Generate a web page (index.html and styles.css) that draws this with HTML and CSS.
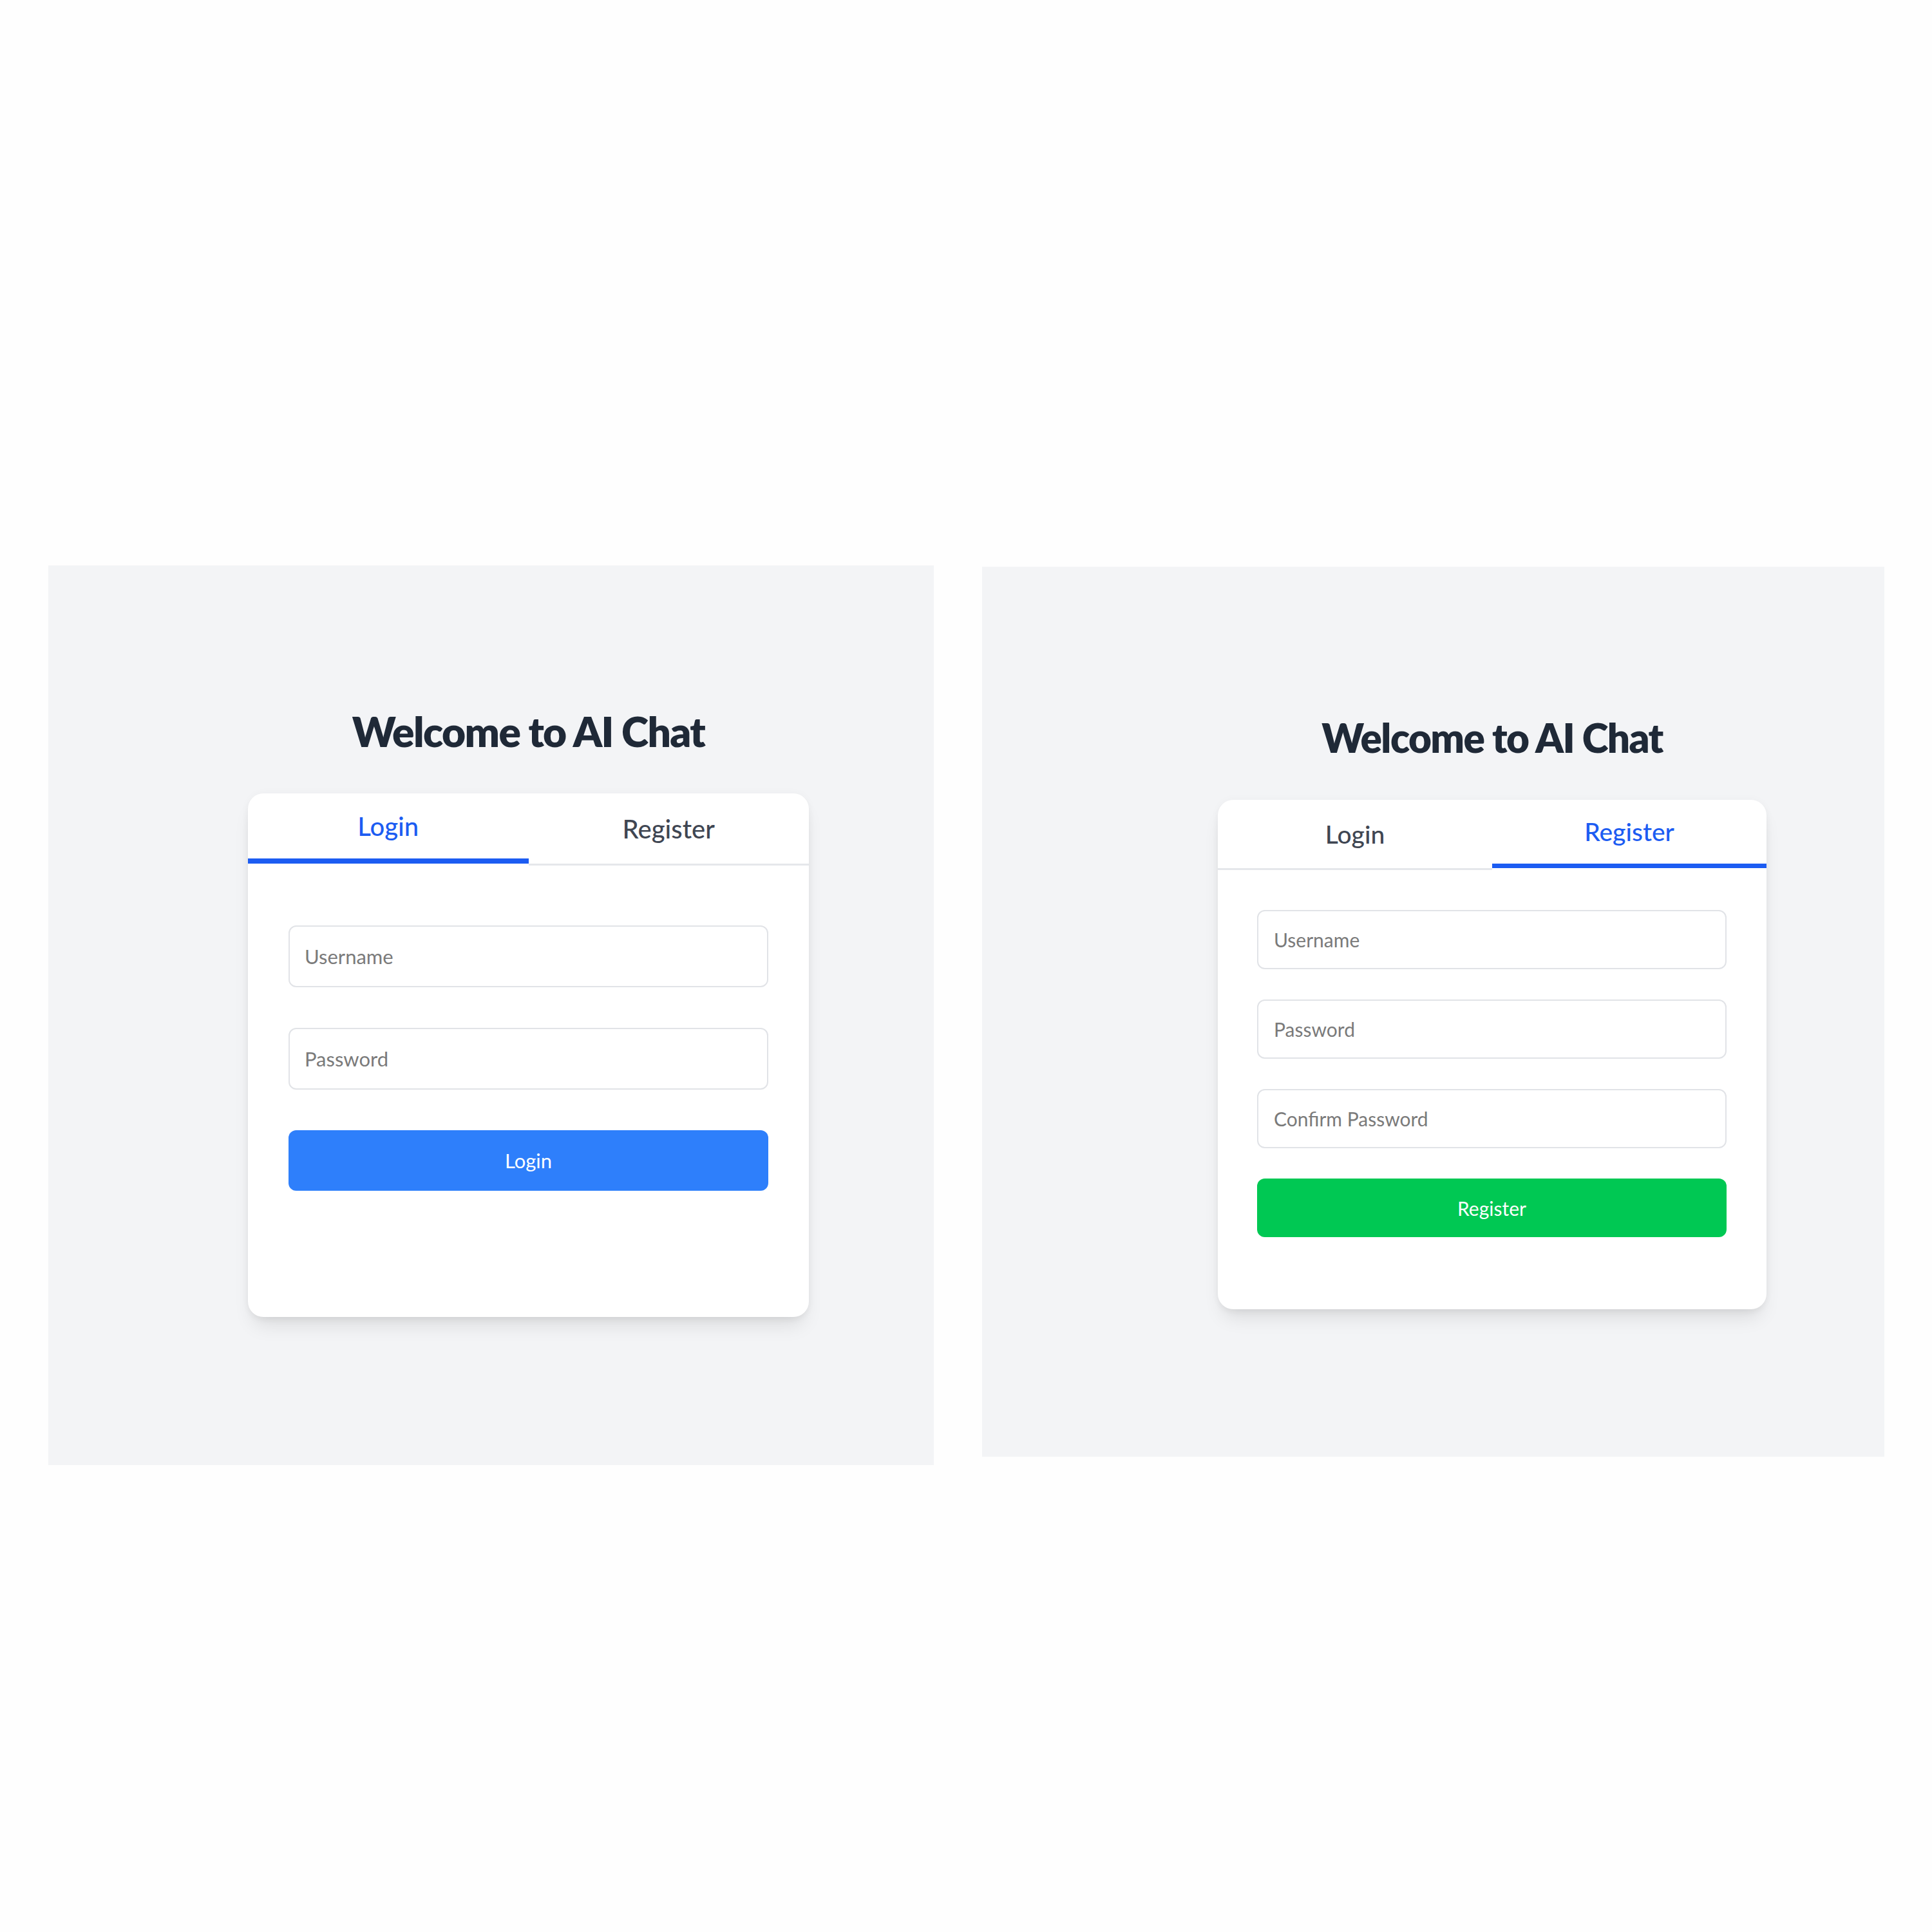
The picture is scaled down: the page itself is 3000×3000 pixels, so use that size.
FILE: index.html
```html
<!DOCTYPE html>
<html lang="en">
<head>
<meta charset="utf-8">
<title>AI Chat - Login / Register</title>
<link rel="stylesheet" href="styles.css">
</head>
<body>
<div class="stage">
  <section class="panel panel-login">
    <div class="column">
      <h1 class="title">Welcome to AI Chat</h1>
      <div class="card">
        <div class="tabs">
          <div class="tab active">Login</div>
          <div class="tab">Register</div>
        </div>
        <form class="form">
          <input class="field" type="text" placeholder="Username">
          <input class="field" type="password" placeholder="Password">
          <button class="btn btn-blue" type="button">Login</button>
        </form>
      </div>
    </div>
  </section>
  <section class="panel panel-register">
    <div class="column">
      <h1 class="title">Welcome to AI Chat</h1>
      <div class="card">
        <div class="tabs">
          <div class="tab">Login</div>
          <div class="tab active">Register</div>
        </div>
        <form class="form">
          <input class="field" type="text" placeholder="Username">
          <input class="field" type="password" placeholder="Password">
          <input class="field" type="password" placeholder="Confirm Password">
          <button class="btn btn-green" type="button">Register</button>
        </form>
      </div>
    </div>
  </section>
</div>
</body>
</html>
```
FILE: styles.css
```css
* { box-sizing: border-box; }
html, body {
  margin: 0;
  padding: 0;
  background: #fefefe;
  font-family: Lato, "Noto Sans", "Liberation Sans", sans-serif;
}
.stage {
  display: flex;
  align-items: flex-start;
  gap: 75px;
  padding-top: 878px;
  padding-left: 75px;
  width: 3000px;
  height: 3000px;
}
.panel {
  background: #f3f4f6;
}
.panel-login {
  width: 1375px;
  height: 1397px;
  padding-top: 226px;
  padding-left: 310px;
}
.panel-register {
  width: 1401px;
  height: 1382px;
  margin-top: 2px;
  padding-top: 234px;
  padding-left: 366px;
}
.panel-login .column { width: 871px; }
.panel-register .column { width: 852px; }

.title {
  margin: 0;
  text-align: center;
  font-weight: 800;
  color: #1f2937;
  line-height: 1;
  letter-spacing: -1.6px;
}
.panel-login .title { font-size: 64px; margin-bottom: 64px; }
.panel-register .title { font-size: 62px; margin-bottom: 66px; }

.card {
  background: #ffffff;
  border-radius: 24px;
  overflow: hidden;
  box-shadow: 0 20px 30px -8px rgba(0, 0, 0, 0.10), 0 6px 14px -4px rgba(0, 0, 0, 0.06), 0 0 14px rgba(0, 0, 0, 0.03);
}
.tabs {
  display: flex;
  align-items: flex-start;
}
.tab {
  flex: 1;
  display: flex;
  align-items: center;
  justify-content: center;
  box-sizing: content-box;
  color: #3f4652;
  font-weight: 500;
  line-height: 1;
  border-bottom: 3px solid #e5e7eb;
}
.tab.active {
  color: #1c5cf2;
  border-bottom-color: #1c5cf2;
}
.panel-login .tab { font-size: 40px; height: 109px; }
.panel-login .tab.active { height: 101px; border-bottom-width: 8px; }
.panel-register .tab { font-size: 39px; height: 106px; }
.panel-register .tab.active { height: 99px; border-bottom-width: 7px; }

.form {
  display: flex;
  flex-direction: column;
  margin: 0;
}
.panel-login .form { padding: 93px 63px 196px 63px; gap: 63px; }
.panel-register .form { padding: 62px 62px 112px 61px; gap: 47px; }

.field {
  display: block;
  width: 100%;
  border: 2px solid #e1e3e7;
  border-radius: 12px;
  background: #ffffff;
  font-family: Lato, "Noto Sans", "Liberation Sans", sans-serif;
  color: #1f2937;
  outline: none;
}
.field::placeholder { color: #7a7a7a; opacity: 1; }
.panel-login .field { height: 96px; font-size: 31px; padding: 0 23px; }
.panel-register .field { height: 92px; font-size: 30px; padding: 0 24px; }

.btn {
  display: block;
  width: 100%;
  border: none;
  border-radius: 12px;
  color: #ffffff;
  font-family: Lato, "Noto Sans", "Liberation Sans", sans-serif;
  cursor: pointer;
}
.btn-blue { background: #2e7ffb; }
.btn-green { background: #00c853; }
.panel-login .btn { height: 94px; font-size: 31px; }
.panel-register .btn { height: 91px; font-size: 30px; }
```
